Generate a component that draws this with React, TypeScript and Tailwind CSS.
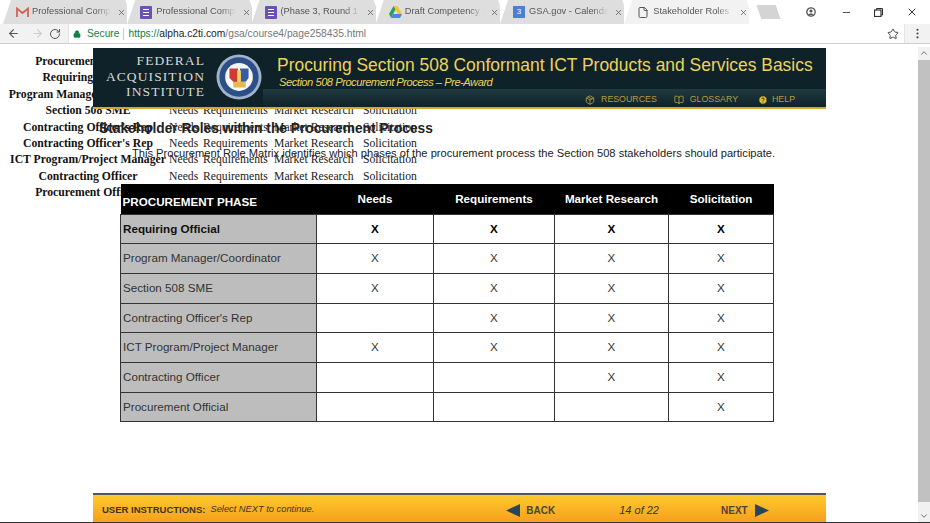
import { ArrowLeft, ArrowRight, RotateCw, Lock, Star, MoreVertical, X, Minus, File, BookOpen, Package, CircleHelp, ChevronDown, ChevronUp } from "lucide-react";

const roles = [
  { name: "Requiring Official", marks: [true, true, true, true], bold: true },
  { name: "Program Manager/Coordinator", marks: [true, true, true, true] },
  { name: "Section 508 SME", marks: [true, true, true, true] },
  { name: "Contracting Officer's Rep", marks: [false, true, true, true] },
  { name: "ICT Program/Project Manager", marks: [true, true, true, true] },
  { name: "Contracting Officer", marks: [false, false, true, true] },
  { name: "Procurement Official", marks: [false, false, false, true] },
];

const oldRows = [
  "Procurement Official",
  "Requiring Official",
  "Program Manager/Coordinator",
  "Section 508 SME",
  "Contracting Officer's Rep",
  "Contracting Officer's Rep",
  "ICT Program/Project Manager",
  "Contracting Officer",
  "Procurement Official",
];

function GmailIcon() {
  return (
    <svg width="13" height="11" viewBox="0 0 13 11" fill="none">
      <path d="M1 10V1.5L6.5 6 12 1.5V10" stroke="#d9604f" strokeWidth="1.8" />
    </svg>
  );
}

function FormsIcon() {
  return (
    <svg width="12" height="13" viewBox="0 0 12 13">
      <rect width="12" height="13" rx="1" fill="#6a52b3" />
      <path d="M3 3.5h6M3 6.5h6M3 9.5h6" stroke="#fff" strokeWidth="1" />
    </svg>
  );
}

function DriveIcon() {
  return (
    <svg width="13" height="12" viewBox="0 0 13 12">
      <path d="M4.5 0h4l4.5 8h-4z" fill="#f4c430" />
      <path d="M4.5 0l2 3.6L2 12 0 8z" fill="#2f9e5b" />
      <path d="M2 12l2-4h9l-2 4z" fill="#4a86e8" />
    </svg>
  );
}

function CalendarIcon() {
  return (
    <div className="w-[12px] h-[12px] bg-[#4a7fd6] flex items-center justify-center text-[8px] leading-none text-white">
      3
    </div>
  );
}

function Tab({ icon, title, active }: { icon: React.ReactNode; title: string; active?: boolean }) {
  return (
    <div
      className={`w-[124.25px] h-[24px] shrink-0 flex items-center pl-[13px] pr-[1px] [clip-path:polygon(0_100%,8px_0,calc(100%-2px)_0,calc(100%+6px)_100%)] ${
        active ? "bg-[#f2f2f2]" : "bg-[#dedede]"
      }`}
    >
      <div className="w-[16px] shrink-0 flex items-center">{icon}</div>
      <span className="flex-1 overflow-hidden whitespace-nowrap text-[9.3px] text-[#555] [mask-image:linear-gradient(to_right,black_80%,transparent)]">
        {title}
      </span>
      <X className="w-[9px] h-[9px] text-[#555] shrink-0 ml-[6px]" />
    </div>
  );
}

function Seal() {
  return (
    <svg width="46" height="46" viewBox="0 0 48 48">
      <circle cx="24" cy="24" r="23.5" fill="#9fb4c8" />
      <circle cx="24" cy="24" r="20.5" fill="#2c4f87" />
      <circle cx="24" cy="24" r="14.5" fill="#f4f4f4" />
      <path d="M13 15h22v13c0 6-5 9-11 10-6-1-11-4-11-10z" fill="#fff" />
      <path d="M14 15h9v16l-5-2-4-4z" fill="#cf3a35" />
      <path d="M25 15h9v10l-3 4h-6z" fill="#355da3" />
      <path d="M18 29h13v6H18z" fill="#e6b94a" />
      <path d="M22 17h4v12h-4z" fill="#f2d35c" />
    </svg>
  );
}

export default function App() {
  return (
    <div className="w-[930px] h-[523px] overflow-hidden flex flex-col bg-white font-['Liberation_Sans',sans-serif]">
      {/* browser tabs */}
      <div className="h-[24px] flex items-center bg-white pl-[3px]">
        <Tab icon={<GmailIcon />} title="Professional Compet" />
        <Tab icon={<FormsIcon />} title="Professional Compet" />
        <Tab icon={<FormsIcon />} title="(Phase 3, Round 1 Dr" />
        <Tab icon={<DriveIcon />} title="Draft Competency M" />
        <Tab icon={<CalendarIcon />} title="GSA.gov - Calendar" />
        <Tab icon={<File className="w-[12px] h-[13px] text-[#555]" />} title="Stakeholder Roles w" active />
        <div className="w-[24px] h-[14px] ml-[8px] bg-[#d4d4d4] [clip-path:polygon(0_0,80%_0,100%_100%,20%_100%)]" />
        <div className="flex-1 flex items-center justify-end">
          <svg width="10" height="10" viewBox="0 0 10 10" className="mr-[25px]">
            <circle cx="5" cy="5" r="4.2" fill="none" stroke="#555" strokeWidth="1.3" />
            <circle cx="5" cy="4" r="1.6" fill="#555" />
            <path d="M2 8c1-2 5-2 6 0z" fill="#555" />
          </svg>
          <Minus className="w-[11px] h-[11px] text-[#444] mr-[22px]" />
          <svg width="9" height="9" viewBox="0 0 9 9" fill="none" stroke="#333" className="mr-[23px]">
            <rect x="0.5" y="2" width="6.5" height="6.5" strokeWidth="1.2" />
            <path d="M2.5 2V.5h6V7H7" />
          </svg>
          <X className="w-[12px] h-[12px] text-[#333] mr-[12px]" />
        </div>
      </div>

      {/* address bar */}
      <div className="h-[23px] bg-white">
        <div className="h-[20px] flex items-center bg-[#f2f2f2] border-b border-[#cfcfcf]">
          <ArrowLeft className="w-[13px] h-[13px] text-[#555] ml-[7px]" />
          <ArrowRight className="w-[13px] h-[13px] text-[#ccc] ml-[11px]" />
          <RotateCw className="w-[12px] h-[12px] text-[#555] ml-[5px]" />
          <div className="flex-1 h-[19px] ml-[7px] mr-[6px] bg-white flex items-center border-x border-[#e3e3e3] text-[10.25px]">
            <Lock className="w-[8px] h-[8px] ml-[4px] text-[#0b8043] fill-[#0b8043]" />
            <span className="ml-[6px] text-[#0b8043]">Secure</span>
            <div className="w-px h-[12px] bg-[#ccc] ml-[4px] mr-[4px]" />
            <span className="text-[#0b8043]">https://</span>
            <span className="text-[#222]">alpha.c2ti.com</span>
            <span className="text-[#777]">/gsa/course4/page258435.html</span>
            <Star className="w-[12px] h-[12px] text-[#444] ml-auto mr-[5px]" />
          </div>
          <MoreVertical className="w-[13px] h-[13px] text-[#444] mr-[6px]" />
        </div>
      </div>

      {/* page and scrollbar */}
      <div className="flex-1 flex min-h-0 border-b border-[#333]">
        <div className="relative flex-1 overflow-hidden">
          {/* unstyled table showing through behind the course frame */}
          <div className="pt-[7px] font-['Liberation_Serif',serif] text-[11.7px] leading-[16.4px] text-[#222]">
            {oldRows.map((role, i) => (
              <div key={i} className="flex h-[16.4px] whitespace-nowrap">
                <div className="w-[175px] pl-[1px] text-center font-bold text-[#111]">{role}</div>
                <div className="-ml-[6px] w-[34px]">Needs</div>
                <div className="w-[71px]">Requirements</div>
                <div className="w-[89px]">Market Research</div>
                <div>Solicitation</div>
              </div>
            ))}
          </div>

          {/* course frame */}
          <div className="absolute left-[93px] top-[1px] bottom-0 w-[733px] flex flex-col">
            <header className="h-[61px] flex flex-col bg-[#0f2229] border-b-2 border-[#d6a72c]">
              <div className="flex-1 flex min-h-0">
                <div className="w-[112px] pt-[5px] text-right font-['Liberation_Serif',serif] text-[13.5px] leading-[15.5px] tracking-[1.1px] text-[#d9d9d2]">
                  <div>FEDERAL</div>
                  <div>ACQUISITION</div>
                  <div>INSTITUTE</div>
                </div>
                <div className="ml-[11px] mt-[6px]">
                  <Seal />
                </div>
                <div className="ml-[15px] pt-[6px]">
                  <div className="text-[17.45px] leading-[22px] text-[#ecd35c] whitespace-nowrap">
                    Procuring Section 508 Conformant ICT Products and Services Basics
                  </div>
                  <div className="ml-[2px] -mt-[1px] text-[11.2px] leading-[14px] italic tracking-[-0.5px] text-[#ecd35c] whitespace-nowrap">
                    Section 508 Procurement Process – Pre-Award
                  </div>
                </div>
              </div>
              <div className="h-[18px] pt-[4px] ml-[170px] flex items-center justify-end pr-[31px] text-[8.8px] text-[#b59c42] bg-gradient-to-b from-[#1f3a40] to-[#0f2229]">
                <div className="flex items-center gap-[6px]">
                  <Package className="w-[10px] h-[10px]" />
                  RESOURCES
                </div>
                <div className="ml-[17px] flex items-center gap-[6px]">
                  <BookOpen className="w-[10px] h-[10px]" />
                  GLOSSARY
                </div>
                <div className="ml-[20px] flex items-center gap-[4px]">
                  <CircleHelp className="w-[10px] h-[10px] fill-[#e6c02e] text-[#0f2229]" />
                  HELP
                </div>
              </div>
            </header>

            <main className="flex-1 min-h-0 pl-[6px]">
              <h1 className="mt-[12px] text-[13.75px] leading-[16px] font-bold text-[#222]">
                Stakeholder Roles within the Procurement Process
              </h1>
              <p className="mt-[9px] pl-[33px] text-[11.14px] leading-[14px] text-[#222] whitespace-nowrap">
                This Procurement Role Matrix identifies which phases of the procurement process the Section 508 stakeholders should participate.
              </p>
              <table className="mt-[24px] ml-[21px] w-[653px] table-fixed border-collapse text-[11.65px] text-[#333]">
                <colgroup>
                  <col className="w-[196px]" />
                  <col className="w-[117px]" />
                  <col className="w-[121px]" />
                  <col className="w-[114px]" />
                  <col className="w-[105px]" />
                </colgroup>
                <thead>
                  <tr className="h-[30px] bg-black text-white font-bold">
                    <th className="pl-[2px] pt-[6px] text-left">PROCUREMENT PHASE</th>
                    <th className="text-center">Needs</th>
                    <th className="text-center">Requirements</th>
                    <th className="text-center">Market Research</th>
                    <th className="text-center">Solicitation</th>
                  </tr>
                </thead>
                <tbody>
                  {roles.map((r) => (
                    <tr key={r.name} className="h-[29.7px]">
                      <td className={`border border-[#333] bg-[#bdbdbd] pl-[2px] pb-[1px] ${r.bold ? "font-bold text-[#111]" : ""}`}>
                        {r.name}
                      </td>
                      {r.marks.map((m, i) => (
                        <td key={i} className={`border border-[#333] text-center pb-[1px] ${r.bold ? "font-bold text-black" : ""}`}>
                          {m ? "X" : ""}
                        </td>
                      ))}
                    </tr>
                  ))}
                </tbody>
              </table>
            </main>

            <footer className="h-[29px] pt-[3px] flex items-center border-t-2 border-[#555] bg-gradient-to-b from-[#fdca2e] to-[#f79f1c] text-[9.5px] text-[#3a3320]">
              <span className="ml-[9px] font-bold">USER INSTRUCTIONS:</span>
              <span className="ml-[5px] italic text-[9.3px]">Select NEXT to continue.</span>
              <svg width="14" height="13" viewBox="0 0 14 13" className="ml-[192px]">
                <path d="M0 6.5L14 0v13z" fill="#27465a" />
              </svg>
              <span className="ml-[6px] font-bold text-[10px] text-[#4b4630]">BACK</span>
              <span className="ml-[64px] italic text-[11px]">14 of 22</span>
              <span className="ml-[62px] font-bold text-[10px] text-[#4b4630]">NEXT</span>
              <svg width="14" height="13" viewBox="0 0 14 13" className="ml-[7px]">
                <path d="M14 6.5L0 0v13z" fill="#27465a" />
              </svg>
            </footer>
          </div>
        </div>

        {/* scrollbar */}
        <div className="w-[12px] flex flex-col items-center bg-[#f1f1f1]">
          <ChevronUp className="w-[10px] h-[10px] mt-[1px] text-[#555]" />
          <div className="w-full flex-1 mt-[2px] mb-[9px] bg-[#c1c1c1]" />
          <ChevronDown className="w-[10px] h-[10px] mb-[1px] text-[#555]" />
        </div>
      </div>
    </div>
  );
}
